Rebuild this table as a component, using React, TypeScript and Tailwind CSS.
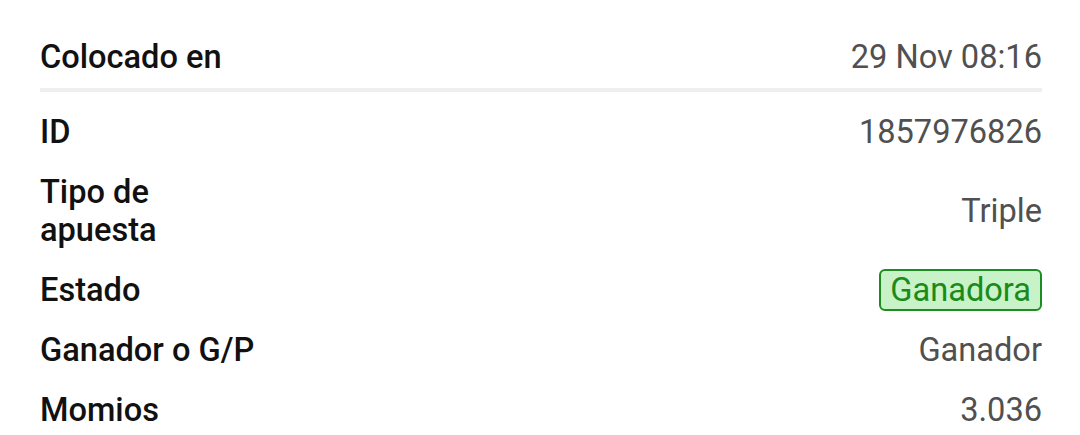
const rows: { label: string; value: string; badge?: boolean }[] = [
  { label: "ID", value: "1857976826" },
  { label: "Tipo de apuesta", value: "Triple" },
  { label: "Estado", value: "Ganadora", badge: true },
  { label: "Ganador o G/P", value: "Ganador" },
  { label: "Momios", value: "3.036" },
];

export default function App() {
  return (
    <div
      className="min-h-[435px] w-[1080px] bg-white pl-[40px] pr-[38px] pt-[38px] text-[32.6px] leading-[38px]"
      style={{ fontFamily: "Roboto, 'Noto Sans', sans-serif" }}
    >
      <div className="flex items-center justify-between pb-[12px]">
        <span className="font-medium text-[#111]">Colocado en</span>
        <span className="text-[#505050]">29 Nov 08:16</span>
      </div>
      <div className="mb-[10px] h-[4px] bg-[#efefef]" />
      {rows.map((r) => (
        <div key={r.label} className="flex items-center justify-between py-[11px]">
          <span className="w-[225px] font-medium text-[#111]">{r.label}</span>
          {r.badge ? (
            <span className="-my-[2px] rounded-[6px] border-2 border-[#1f8c1f] bg-[#c8f2c8] px-[9px] text-[#1a8a1a]">
              {r.value}
            </span>
          ) : (
            <span className="text-[#505050]">{r.value}</span>
          )}
        </div>
      ))}
    </div>
  );
}
